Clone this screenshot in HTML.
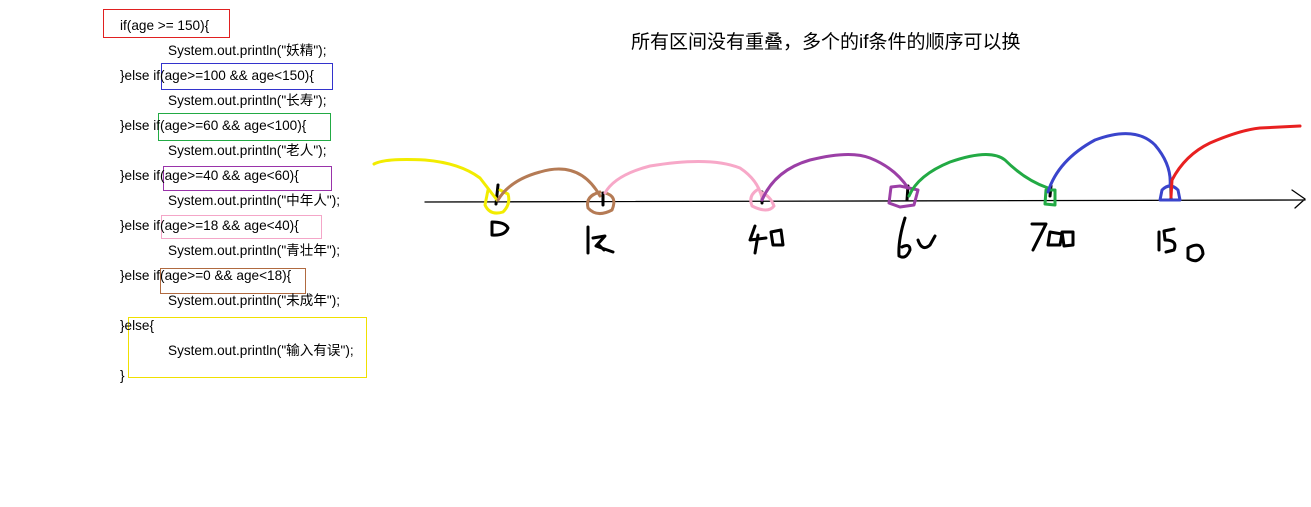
<!DOCTYPE html>
<html><head><meta charset="utf-8"><style>
body{margin:0;width:1311px;height:507px;background:#fff;position:relative;overflow:hidden;font-family:"Liberation Sans","Noto Sans CJK SC",sans-serif;}
.t{position:absolute;font-size:13.6px;color:#000;white-space:nowrap;line-height:16px;}
.b{position:absolute;border:1px solid;box-sizing:border-box;}
</style></head><body>
<div class="b" style="left:103px;top:9px;width:127px;height:29px;border-color:#e02020"></div>
<div class="b" style="left:161px;top:63px;width:172px;height:27px;border-color:#3333cc"></div>
<div class="b" style="left:158px;top:113px;width:173px;height:28px;border-color:#22aa44"></div>
<div class="b" style="left:163px;top:166px;width:169px;height:25px;border-color:#9933aa"></div>
<div class="b" style="left:161px;top:215px;width:161px;height:24px;border-color:#f4a6c8"></div>
<div class="b" style="left:160px;top:268px;width:146px;height:26px;border-color:#b06a40"></div>
<div class="b" style="left:128px;top:317px;width:239px;height:61px;border-color:#f0e000"></div>
<div class="t" style="left:120px;top:18px">if(age &gt;= 150){</div>
<div class="t" style="left:168px;top:43px">System.out.println("妖精");</div>
<div class="t" style="left:120px;top:68px">}else if(age&gt;=100 &amp;&amp; age&lt;150){</div>
<div class="t" style="left:168px;top:93px">System.out.println("长寿");</div>
<div class="t" style="left:120px;top:118px">}else if(age&gt;=60 &amp;&amp; age&lt;100){</div>
<div class="t" style="left:168px;top:143px">System.out.println("老人");</div>
<div class="t" style="left:120px;top:168px">}else if(age&gt;=40 &amp;&amp; age&lt;60){</div>
<div class="t" style="left:168px;top:193px">System.out.println("中年人");</div>
<div class="t" style="left:120px;top:218px">}else if(age&gt;=18 &amp;&amp; age&lt;40){</div>
<div class="t" style="left:168px;top:243px">System.out.println("青壮年");</div>
<div class="t" style="left:120px;top:268px">}else if(age&gt;=0 &amp;&amp; age&lt;18){</div>
<div class="t" style="left:168px;top:293px">System.out.println("未成年");</div>
<div class="t" style="left:120px;top:318px">}else{</div>
<div class="t" style="left:168px;top:343px">System.out.println("输入有误");</div>
<div class="t" style="left:120px;top:368px">}</div>
<div class="t" style="left:631px;top:31px;font-size:19px;line-height:24px">所有区间没有重叠，多个的if条件的顺序可以换</div>
<svg width="1311" height="507" style="position:absolute;left:0;top:0" fill="none" stroke-linecap="round" stroke-linejoin="round">
<path d="M425 202 L1305 200 M1292 190 L1305 199 L1295 208" stroke="#000" stroke-width="1.3"/>
<g stroke="#000" stroke-width="3">
<path d="M498 185 L496 204 M603 193 L603 205 M762 192 L762 203 M908 186 L907 200 M1051 186 L1050 196 M1171 185 L1171 198"/>
<path d="M492 222 L492 235 Q505 236 508 228 Q505 222 492 222"/>
<path d="M588 227 L588 253 M593 238 L605 236 L596 246 L613 252 M598 244 L604 250"/>
<path d="M755 226 L750 240 L766 238 M758 235 L755 253 M771 232 L781 230 L783 245 L773 245 Z"/>
<path d="M905 218 Q898 240 899 256 Q906 260 910 250 Q910 243 902 247 M918 240 Q922 252 930 245 L935 236"/>
<path d="M1032 224 L1046 224 L1033 250 M1050 232 L1048 245 L1060 245 L1062 234 Z M1062 232 L1064 246 L1073 245 L1073 232 Z"/>
<path d="M1159 232 L1159 250 M1174 229 L1164 231 L1165 240 Q1178 240 1174 250 L1166 252 M1188 248 Q1202 240 1203 254 Q1198 265 1188 258 Z"/>
</g>
<path d="M374 164 Q385 158 425 160 Q460 163 480 178 L497 200" stroke="#f2ec00" stroke-width="3"/>
<path d="M488 190 L485 205 Q490 216 503 212 Q511 204 508 194 L500 190" stroke="#f2ec00" stroke-width="3"/>
<path d="M498 200 Q510 180 540 172 Q580 160 600 196" stroke="#b57b55" stroke-width="3"/>
<path d="M600 192 Q585 196 588 208 Q597 218 612 210 Q618 196 605 193" stroke="#b57b55" stroke-width="3"/>
<path d="M605 193 Q615 175 650 166 Q710 156 740 168 Q758 180 762 198" stroke="#f7a8c8" stroke-width="3"/>
<path d="M757 190 Q748 196 752 206 Q768 214 774 206 Q770 195 760 192" stroke="#f7a8c8" stroke-width="3"/>
<path d="M762 200 Q775 170 810 160 Q850 150 870 158 Q895 168 908 188" stroke="#9b3fa6" stroke-width="3"/>
<path d="M891 187 L889 203 L900 207 L914 205 L918 190 L900 186 Z" stroke="#9b3fa6" stroke-width="3"/>
<path d="M909 196 Q918 175 950 162 Q990 148 1005 160 Q1025 180 1048 188" stroke="#22aa44" stroke-width="3"/>
<path d="M1046 190 L1045 204 L1055 205 L1055 190 Z" stroke="#22aa44" stroke-width="3"/>
<path d="M1048 192 Q1058 160 1095 140 Q1135 125 1155 145 Q1172 165 1170 186" stroke="#3a44cc" stroke-width="3"/>
<path d="M1160 200 L1162 190 Q1170 182 1178 190 L1180 200 Z" stroke="#3a44cc" stroke-width="3"/>
<path d="M1171 197 L1172 180 Q1185 155 1210 143 Q1240 130 1260 128 L1300 126" stroke="#e82020" stroke-width="3"/>
</svg>
</body></html>
